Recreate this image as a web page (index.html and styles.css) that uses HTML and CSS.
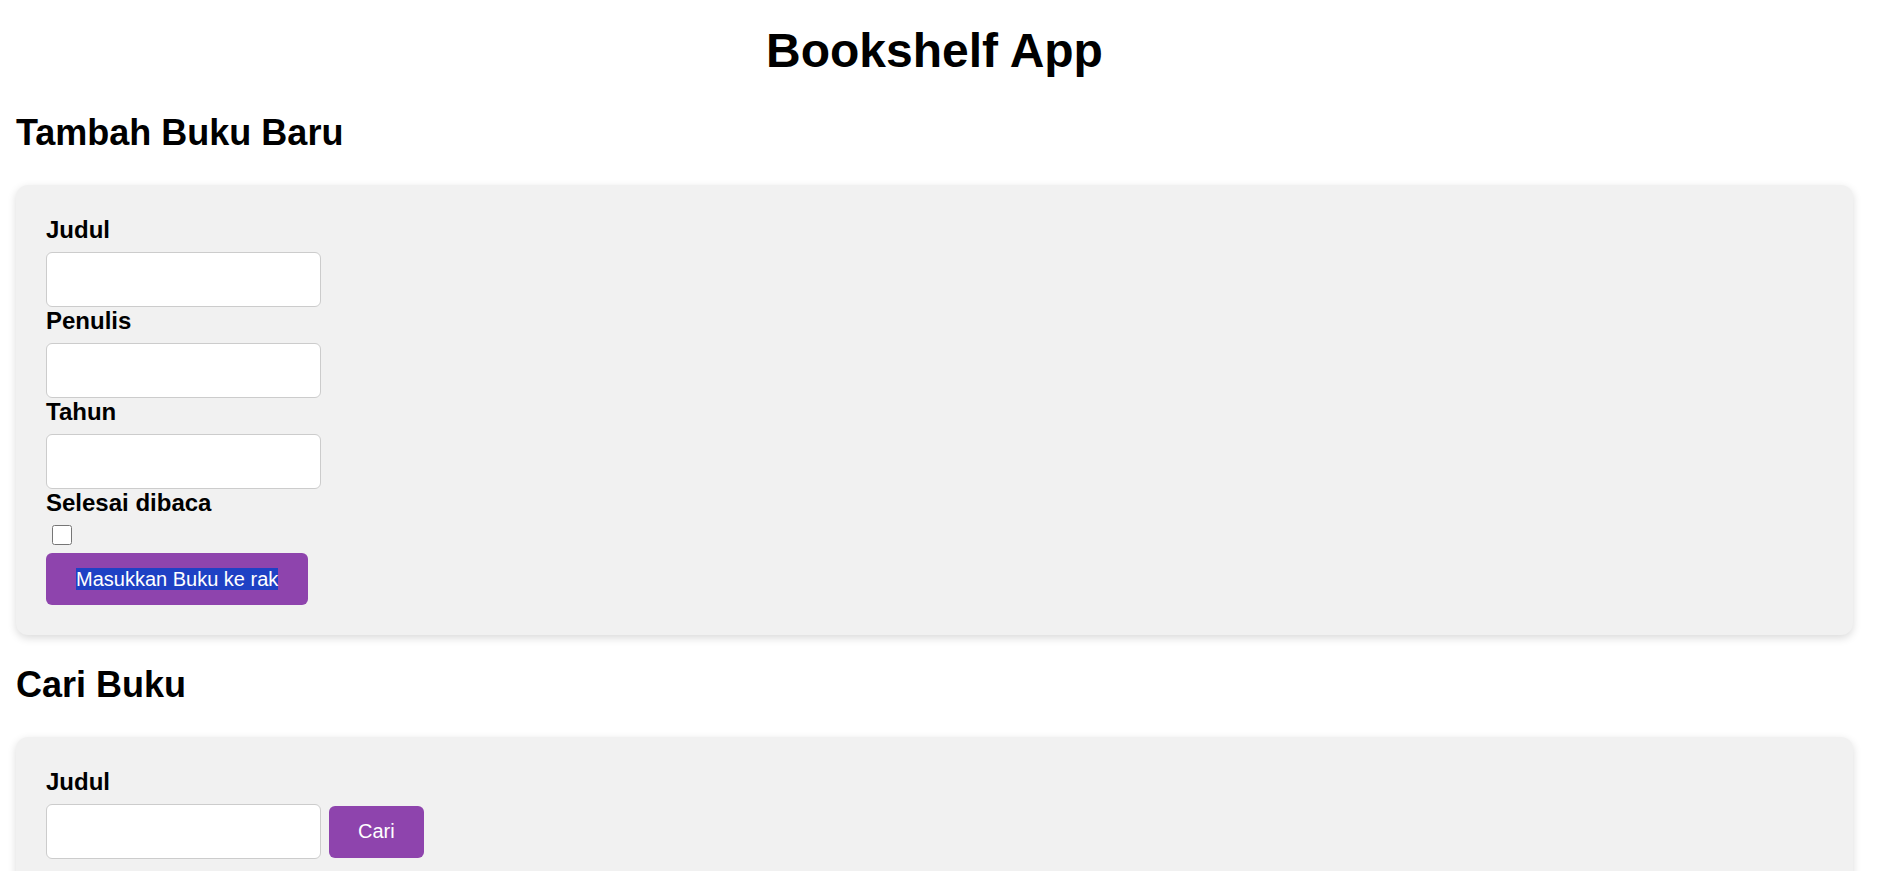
FILE: index.html
```html
<!DOCTYPE html>
<html lang="id">
<head>
    <meta charset="UTF-8">
    <meta name="viewport" content="width=device-width, initial-scale=1.0">
    <title>Bookshelf App</title>
    <link rel="stylesheet" href="styles.css">
</head>
<body>
    <div class="container">
        <header>
            <h1 class="app-title">Bookshelf App</h1>
        </header>

        <section class="add-section">
            <h2 class="section-title">Tambah Buku Baru</h2>
            <form class="card" id="bookForm">
                <label class="field-label" for="bookFormTitle">Judul</label>
                <input class="text-input" id="bookFormTitle" type="text">

                <label class="field-label" for="bookFormAuthor">Penulis</label>
                <input class="text-input" id="bookFormAuthor" type="text">

                <label class="field-label" for="bookFormYear">Tahun</label>
                <input class="text-input" id="bookFormYear" type="number">

                <label class="field-label" for="bookFormIsComplete">Selesai dibaca</label>
                <input class="check-input" id="bookFormIsComplete" type="checkbox">

                <button class="btn" id="bookFormSubmit" type="submit"><span class="selected-text">Masukkan Buku ke rak</span></button>
            </form>
        </section>

        <section class="search-section">
            <h2 class="section-title">Cari Buku</h2>
            <form class="card" id="searchBook">
                <label class="field-label" for="searchBookTitle">Judul</label>
                <div class="search-row">
                    <input class="text-input" id="searchBookTitle" type="text">
                    <button class="btn btn-search" id="searchSubmit" type="submit">Cari</button>
                </div>
            </form>
        </section>
    </div>
</body>
</html>
```

FILE: styles.css
```css
* {
    box-sizing: border-box;
}

body {
    margin: 0;
    font-family: "Liberation Sans", Arial, sans-serif;
    color: #000;
    background: #fff;
}

.container {
    width: 1837px;
    margin-left: 16px;
}

.app-title {
    font-size: 48px;
    font-weight: 700;
    text-align: center;
    margin: 23px 0 34px;
}

.section-title {
    font-size: 36px;
    font-weight: 700;
    margin: 30px 0 31px;
}

.search-section .section-title {
    margin-top: 29px;
}

.card {
    background: #f1f1f1;
    border-radius: 12px;
    padding: 31px 30px 30px;
    box-shadow: 0 3px 8px rgba(0, 0, 0, 0.15);
}

.field-label {
    display: block;
    font-size: 24px;
    font-weight: 700;
    margin-bottom: 8px;
}

.text-input {
    display: block;
    width: 275px;
    height: 55px;
    padding: 0 12px;
    font-family: inherit;
    font-size: 20px;
    background: #fff;
    border: 1px solid #ccc;
    border-radius: 6px;
}

.check-input {
    display: block;
    width: 20px;
    height: 20px;
    margin: 5px 5px 8px 6px;
}

.btn {
    display: block;
    background: #8e44ad;
    color: #fff;
    border: none;
    border-radius: 6px;
    padding: 14.5px 30px;
    font-family: inherit;
    font-size: 20px;
    line-height: 23px;
    cursor: pointer;
}

.selected-text {
    background: #1f41c4;
}

.search-row {
    display: flex;
    align-items: center;
    gap: 8px;
}

.btn-search {
    padding: 14.5px 29px;
}
```
